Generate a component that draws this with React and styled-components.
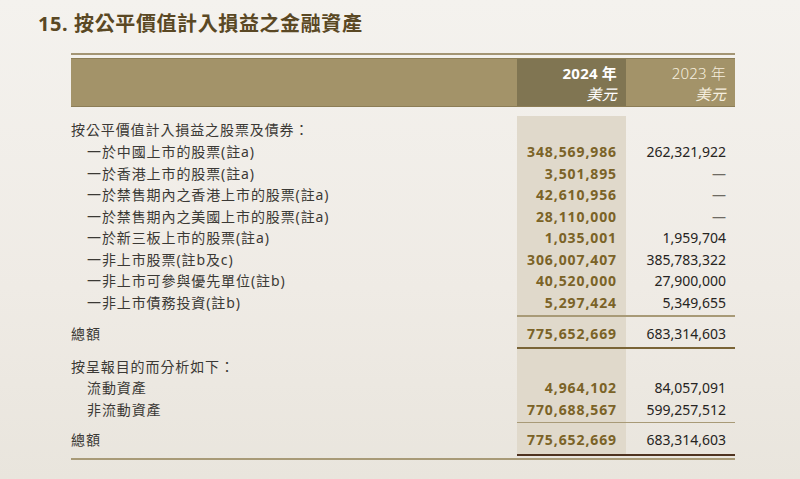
import React from "react";
import styled, { createGlobalStyle } from "styled-components";

const GlobalStyle = createGlobalStyle`
  html, body {
    margin: 0;
    padding: 0;
  }
  body {
    min-height: 479px;
    background: linear-gradient(180deg, #f4f2ee 0%, #efebe5 60%, #e9e5dd 100%);
    font-family: "Noto Sans", "Noto Sans CJK TC", sans-serif;
    color: #3a3835;
  }
`;

const data = [
  { label: "一於中國上市的股票(註a)", cur: "348,569,986", prev: "262,321,922" },
  { label: "一於香港上市的股票(註a)", cur: "3,501,895", prev: "—" },
  { label: "一於禁售期內之香港上市的股票(註a)", cur: "42,610,956", prev: "—" },
  { label: "一於禁售期內之美國上市的股票(註a)", cur: "28,110,000", prev: "—" },
  { label: "一於新三板上市的股票(註a)", cur: "1,035,001", prev: "1,959,704" },
  { label: "一非上市股票(註b及c)", cur: "306,007,407", prev: "385,783,322" },
  { label: "一非上市可參與優先單位(註b)", cur: "40,520,000", prev: "27,900,000" },
  { label: "一非上市債務投資(註b)", cur: "5,297,424", prev: "5,349,655" },
];

const split = [
  { label: "流動資產", cur: "4,964,102", prev: "84,057,091" },
  { label: "非流動資產", cur: "770,688,567", prev: "599,257,512" },
];

export default function App() {
  return (
    <Page>
      <GlobalStyle />
      <Title>15. 按公平價值計入損益之金融資產</Title>
      <Table>
        <TopRule />
        <HeadBand>
          <HeadCell />
          <HeadCell $current>
            2024 年
            <br />
            <Unit>美元</Unit>
          </HeadCell>
          <HeadCell>
            2023 年
            <br />
            <Unit>美元</Unit>
          </HeadCell>
        </HeadBand>

        <Body>
          <Row $h={25} $pt={3}>
            <Label>按公平價值計入損益之股票及債券：</Label>
            <Cur />
            <Prev />
          </Row>
          {data.map((r) => (
            <Row key={r.label}>
              <Label $indent>{r.label}</Label>
              <Cur>{r.cur}</Cur>
              <Prev $dash={r.prev === "—"}>{r.prev}</Prev>
            </Row>
          ))}
          <Spacer $h={2} />
          <Rule $h={2} $color="#a89a77" />
          <Spacer $h={6} />
          <Row>
            <Label>總額</Label>
            <Cur>775,652,669</Cur>
            <Prev>683,314,603</Prev>
          </Row>
          <Spacer $h={2.5} />
          <Rule $h={2} $color="#7a6436" />
          <Spacer $h={6.5} />
          <Row>
            <Label>按呈報目的而分析如下：</Label>
            <Cur />
            <Prev />
          </Row>
          {split.map((r) => (
            <Row key={r.label}>
              <Label $indent>{r.label}</Label>
              <Cur>{r.cur}</Cur>
              <Prev>{r.prev}</Prev>
            </Row>
          ))}
          <Spacer $h={1.5} />
          <Rule $h={1.5} $color="#a89a77" />
          <Spacer $h={6} />
          <Row>
            <Label>總額</Label>
            <Cur>775,652,669</Cur>
            <Prev>683,314,603</Prev>
          </Row>
          <Spacer $h={3.5} />
          <Rule $h={1.5} $color="#4f3320" />
          <Gap />
          <FullRule />
        </Body>
      </Table>
    </Page>
  );
}

const Page = styled.div`
  padding: 10px 0 0 38px;
`;

const Title = styled.h1`
  margin: 0;
  font-size: 20px;
  line-height: 28px;
  font-weight: 700;
  letter-spacing: 0.6px;
  color: #5a4824;
`;

const Table = styled.div`
  width: 664px;
  margin: 15px 0 0 33px;
`;

const TopRule = styled.div`
  height: 2px;
  background: #a39574;
`;

const cols = "446px 109px 109px";

const HeadBand = styled.div`
  display: grid;
  grid-template-columns: ${cols};
  margin-top: 3px;
  height: 47px;
  background: #a39369;
  border-top: 1px solid #8c7d56;
  border-bottom: 1px solid #8c7d56;
`;

const HeadCell = styled.div`
  text-align: right;
  padding: 4px 9px 0 0;
  font-size: 15px;
  line-height: 21px;
  letter-spacing: 0.2px;
  background: ${(p) => (p.$current ? "#807552" : "transparent")};
  color: ${(p) => (p.$current ? "#ffffff" : "#f6efdf")};
  font-weight: ${(p) => (p.$current ? 700 : 300)};
`;

const Unit = styled.span`
  font-style: italic;
  font-weight: 400;
`;

const Body = styled.div`
  margin-top: 9px;
`;

const Row = styled.div`
  display: grid;
  grid-template-columns: ${cols};
  height: ${(p) => p.$h || 21.5}px;
  font-size: 14px;
  line-height: 21.5px;

  & > div {
    padding-top: ${(p) => p.$pt || 0}px;
  }
`;

const Label = styled.div`
  padding-left: ${(p) => (p.$indent ? 16 : 0)}px;
  letter-spacing: 0.9px;
  color: #3b3935;
  white-space: nowrap;
`;

const Cur = styled.div`
  background: #e0d9cb;
  text-align: right;
  padding-right: 9px;
  font-weight: 700;
  letter-spacing: 0.9px;
  color: #7b6327;
`;

const Prev = styled.div`
  text-align: right;
  padding-right: 9px;
  color: ${(p) => (p.$dash ? "#6e6a63" : "#262422")};
`;

const Spacer = styled.div`
  display: grid;
  grid-template-columns: ${cols};
  height: ${(p) => p.$h}px;

  &::before {
    content: "";
  }
  &::after {
    content: "";
    grid-column: 2;
    background: #e0d9cb;
  }
`;

const Rule = styled.div`
  margin-left: 446px;
  height: ${(p) => p.$h}px;
  background: ${(p) => p.$color};
`;

const Gap = styled.div`
  height: 2.5px;
`;

const FullRule = styled.div`
  height: 1.5px;
  background: #a89a77;
`;
